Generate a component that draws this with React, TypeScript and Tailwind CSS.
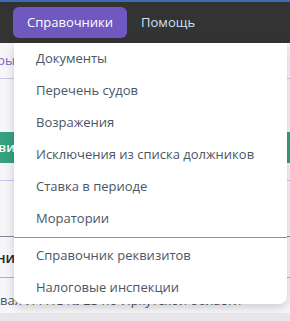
import React from "react";

const items1 = [
  "Документы",
  "Перечень судов",
  "Возражения",
  "Исключения из списка должников",
  "Ставка в периоде",
  "Моратории",
];
const items2 = ["Справочник реквизитов", "Налоговые инспекции"];

export default function App() {
  return (
    <div
      className="relative w-[290px] h-[321px] overflow-hidden bg-[#f6f6f9]"
      style={{ fontFamily: '"Open Sans", "Noto Sans", sans-serif' }}
    >
      {/* top bar */}
      <div className="h-[2px] bg-[#3a6db5]" />
      <div className="h-[41px] bg-[#333333] flex items-center pl-[13px] gap-[14px]">
        <div className="h-[31px] px-[14px] rounded-[6px] bg-[#6f58bf] flex items-center text-white text-[13px]">
          Справочники
        </div>
        <div className="text-[#cfe0f4] text-[13px]">Помощь</div>
      </div>

      {/* background page content */}
      <div className="flex flex-col">
        <div className="h-[35px] flex items-center">
          <div className="w-[15px] flex justify-end">
            <span className="shrink-0 whitespace-nowrap text-[13px] text-[#7b68c6]">Фильтры</span>
          </div>
        </div>
        <div className="h-px bg-[#c9c2ea]" />
        <div className="h-[53px]" />
        <div className="h-[31px] bg-[#34a27f] flex items-center">
          <div className="w-[15px] flex justify-end">
            <span className="shrink-0 whitespace-nowrap text-[13px] font-semibold text-white">Добави</span>
          </div>
        </div>
        <div className="h-[17px]" />
        <div className="h-px bg-[#c9c2ea]" />
        <div className="h-[55px]" />
        <div className="h-px bg-[#7d8597]" />
        <div className="h-[40px] flex items-center">
          <div className="w-[15px] flex justify-end">
            <span className="shrink-0 whitespace-nowrap text-[14px] font-semibold text-[#1f2430]">Наименовани</span>
          </div>
        </div>
        <div className="h-px bg-[#a9b1c4]" />
        <div className="h-[35px] flex items-end pb-[3px]">
          <span className="text-[13px] text-[#4b5565] whitespace-nowrap">
            вая ИФНС № 23 по Иркутской области
          </span>
        </div>
        <div className="h-[20px] bg-[#e6e6eb]" />
      </div>

      {/* dropdown menu */}
      <div className="absolute left-[14px] top-[43px] w-[273px] bg-white rounded-b-[8px] shadow-[0_3px_10px_rgba(0,0,0,0.18)] flex flex-col text-[13px] text-[#4b5565]">
        {items1.map((t) => (
          <div key={t} className="h-[32px] flex items-center pl-[22px] whitespace-nowrap">
            {t}
          </div>
        ))}
        <div className="h-px bg-[#8a93a8] my-[2px]" />
        {items2.map((t) => (
          <div key={t} className="h-[32px] flex items-center pl-[22px] whitespace-nowrap">
            {t}
          </div>
        ))}
      </div>
    </div>
  );
}
